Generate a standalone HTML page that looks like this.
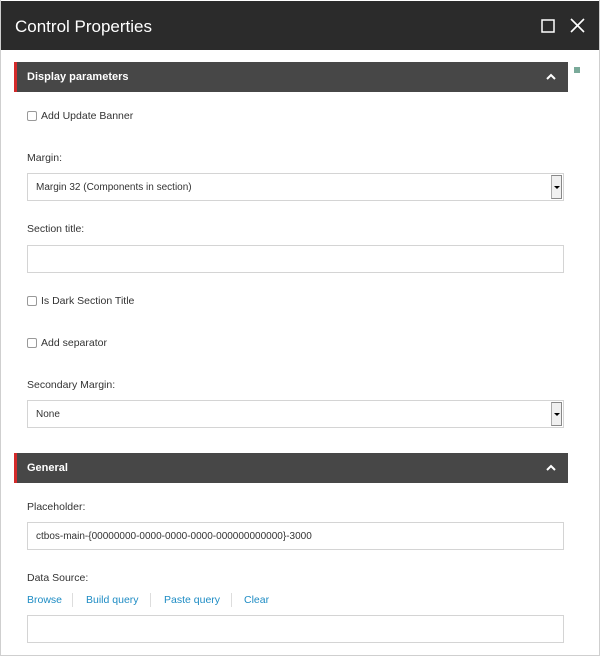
<!DOCTYPE html>
<html><head><style>
*{box-sizing:border-box;margin:0;padding:0}
body{width:600px;height:656px;background:#fff;font-family:"Liberation Sans",sans-serif;position:relative;overflow:hidden;color:#333}
.frame{position:absolute;left:0;top:0;width:600px;height:656px;border:1px solid #cfcfcf;border-top:none}
.hdr{position:absolute;left:1px;top:1px;width:598px;height:49px;background:#2b2b2b;color:#fff}
.hdr .t{position:absolute;left:14px;top:16px;font-size:17px}
.sec{position:absolute;left:14px;width:554px;height:30px;background:#474747;border-left:3px solid #d32a2a;color:#fff;font-size:11px;font-weight:bold}
.sec span{position:absolute;left:10px;top:9px}
.sec svg{position:absolute;right:12px;top:11px}
.lbl{position:absolute;left:27px;font-size:10.5px;color:#333}
.cb{position:absolute;left:27px;width:10px;height:10px;border:1px solid #999;border-radius:2px;background:#fff}
.cbl{position:absolute;left:41px;font-size:10.5px;color:#333}
.inp{position:absolute;left:27px;width:537px;height:28px;border:1px solid #d4d4d4;font-size:10px;padding:8px 0 0 8px;color:#333}
.sel .ar{position:absolute;right:1px;top:1px;width:11px;height:24px;background:#f0f0f0;border:1px solid #888;border-left:1px solid #aaa}
.sel .ar:after{content:"";position:absolute;left:2px;top:10px;border-left:3px solid transparent;border-right:3px solid transparent;border-top:3px solid #000}
.lnk{position:absolute;top:594px;font-size:10.5px;color:#1e8cc4}
.sep{position:absolute;top:593px;width:1px;height:14px;background:#ddd}
</style></head><body>
<div class="frame"></div>
<div class="hdr"><span class="t">Control Properties</span>
<svg style="position:absolute;left:540px;top:18px" width="14" height="14"><rect x="1" y="1" width="12" height="12" fill="none" stroke="#fff" stroke-width="1.5"/></svg>
<svg style="position:absolute;left:569px;top:17px" width="15" height="15"><path d="M1 1L14 14M14 1L1 14" stroke="#fff" stroke-width="1.6"/></svg>
</div>
<div style="position:absolute;left:574px;top:67px;width:6px;height:6px;background:#7aaa9a"></div>
<div class="sec" style="top:62px"><span>Display parameters</span><svg width="10" height="8"><path d="M1 6L5 2L9 6" fill="none" stroke="#fff" stroke-width="2"/></svg></div>
<div class="cb" style="top:111px"></div><div class="cbl" style="top:110px">Add Update Banner</div>
<div class="lbl" style="top:152px">Margin:</div>
<div class="inp sel" style="top:173px">Margin 32 (Components in section)<div class="ar"></div></div>
<div class="lbl" style="top:223px">Section title:</div>
<div class="inp" style="top:245px"></div>
<div class="cb" style="top:296px"></div><div class="cbl" style="top:295px">Is Dark Section Title</div>
<div class="cb" style="top:338px"></div><div class="cbl" style="top:337px">Add separator</div>
<div class="lbl" style="top:379px">Secondary Margin:</div>
<div class="inp sel" style="top:400px">None<div class="ar"></div></div>
<div class="sec" style="top:453px"><span>General</span><svg width="10" height="8"><path d="M1 6L5 2L9 6" fill="none" stroke="#fff" stroke-width="2"/></svg></div>
<div class="lbl" style="top:501px">Placeholder:</div>
<div class="inp" style="top:522px">ctbos-main-{00000000-0000-0000-0000-000000000000}-3000</div>
<div class="lbl" style="top:572px">Data Source:</div>
<span class="lnk" style="left:27px">Browse</span><div class="sep" style="left:72px"></div>
<span class="lnk" style="left:86px">Build query</span><div class="sep" style="left:150px"></div>
<span class="lnk" style="left:164px">Paste query</span><div class="sep" style="left:231px"></div>
<span class="lnk" style="left:244px">Clear</span>
<div class="inp" style="top:615px"></div>
</body></html>
